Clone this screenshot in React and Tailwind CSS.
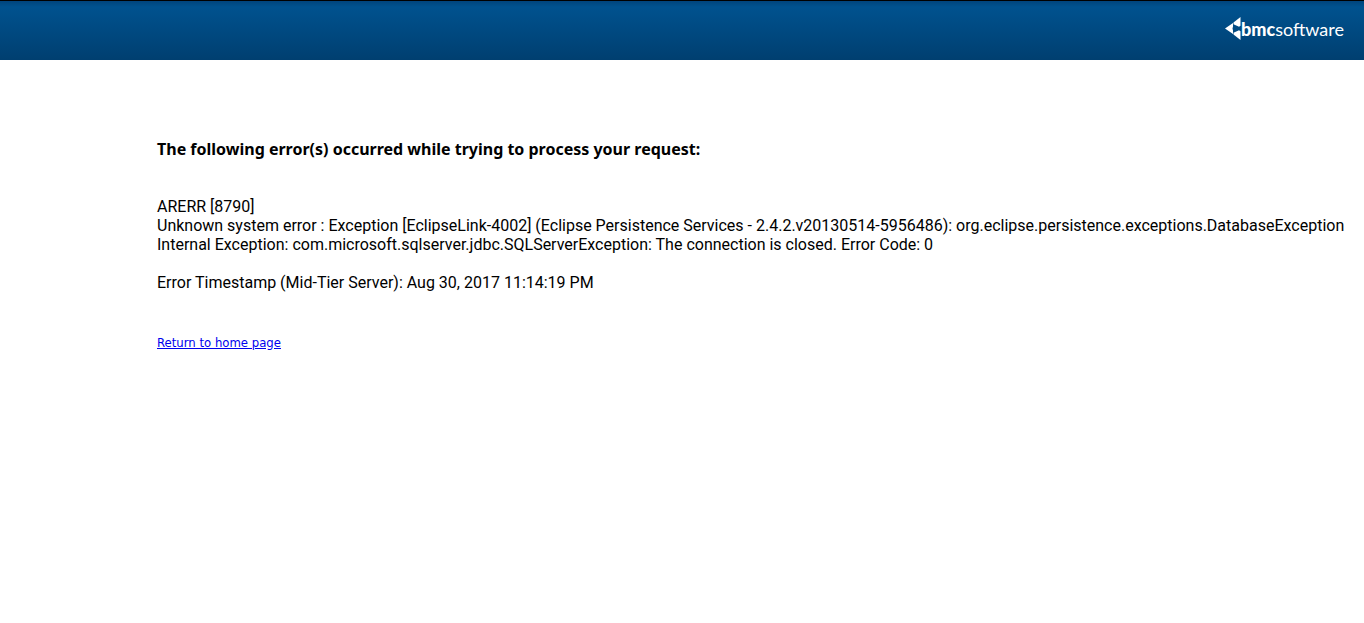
function BrandLogo() {
  return (
    <div className="flex items-center text-white" aria-label="bmcsoftware">
      <svg className="h-6 w-4 shrink-0" viewBox="0 0 16 24" fill="currentColor" aria-hidden="true">
        <path d="M0 11.500 8 6V9.500L7.500 11.500 8 13.500V17Z" />
        <path d="M8.500 5.500 15.500 0V8.800L14 9.800 8.500 7.200Z" />
        <path d="M8.500 17.500 15.500 23V14.200L14 13.200 8.500 15.800Z" />
      </svg>
      <span className="font-['Lato','Open_Sans',sans-serif] text-lg leading-6">
        <span className="font-black">bmc</span>
        <span>software</span>
      </span>
    </div>
  );
}

export default function App() {
  return (
    <div className="min-h-screen bg-white font-['Roboto','Noto_Sans',sans-serif] text-base text-black">
      <header className="flex h-15 items-center justify-end border-t border-black bg-linear-to-b from-[#00447c] from-0% via-[#00528f] via-10% to-[#003f70] pr-5 pb-1">
        <BrandLogo />
      </header>
      <main className="px-5 pt-20 pl-[157px] leading-[19px]">
        <h1 className="font-['Noto_Sans',sans-serif] font-bold">The following error(s) occurred while trying to process your request:</h1>
        <div className="mt-[38px]">
          <p>ARERR [8790]</p>
          <p className="whitespace-nowrap">
            Unknown system error : Exception [EclipseLink-4002] (Eclipse Persistence Services -
            2.4.2.v20130514-5956486): org.eclipse.persistence.exceptions.DatabaseException
          </p>
          <p>Internal Exception: com.microsoft.sqlserver.jdbc.SQLServerException: The connection is closed. Error Code: 0</p>
          <p className="mt-[19px]">Error Timestamp (Mid-Tier Server): Aug 30, 2017 11:14:19 PM</p>
        </div>
        <a href="#" className="mt-[41px] inline-block font-['DejaVu_Sans_Condensed',sans-serif] text-[13px] leading-5 text-[#0000ee] underline">
          Return to home page
        </a>
      </main>
    </div>
  );
}
